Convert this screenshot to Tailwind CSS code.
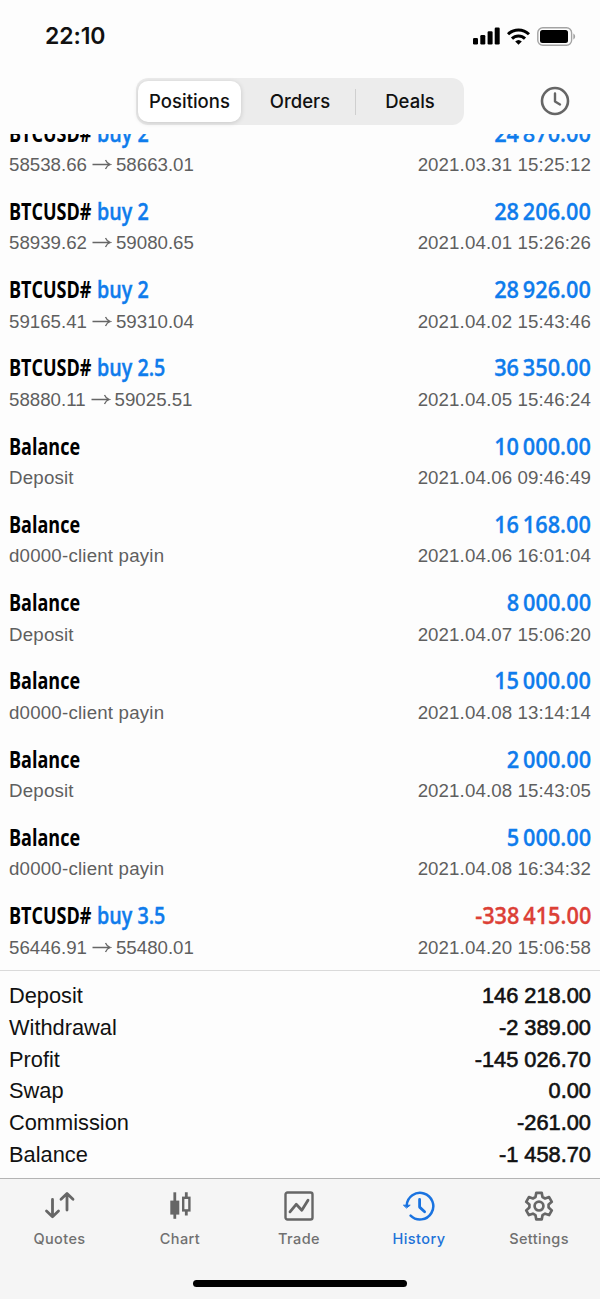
<!DOCTYPE html>
<html lang="en">
<head>
  <meta charset="UTF-8" />
  <meta name="viewport" content="width=device-width, initial-scale=1.0"/>
  <title>History | Positions</title>
  <script src="https://cdn.jsdelivr.net/npm/@tailwindcss/browser@4"></script>
</head>
<body class="bg-[#fdfdfd] text-black">

  <div class="w-[600px] h-[1299px] flex flex-col overflow-hidden font-['Liberation_Sans',sans-serif]">

    <!-- Status bar -->
    <div class="h-[72px] shrink-0 flex items-center justify-between pl-[45px] pr-[24px]">
      <span class="font-['Inter',sans-serif] font-semibold text-[23px] leading-none tracking-[-0.1px] text-[#111]">22:10</span>
      <div class="flex items-center gap-[7px]">
        <svg width="28" height="18" viewBox="0 0 28 18" fill="#000">
          <rect x="1" y="11" width="5" height="6.5" rx="1.2"/>
          <rect x="8.3" y="8" width="5" height="9.5" rx="1.2"/>
          <rect x="15.6" y="4.3" width="5" height="13.2" rx="1.2"/>
          <rect x="22.7" y="0.5" width="5" height="17" rx="1.2"/>
        </svg>
        <svg width="23" height="17" viewBox="0 0 23 17" fill="none" stroke="#000" stroke-width="3">
          <path d="M1 6.3a15 15 0 0 1 21 0"/>
          <path d="M5 10.6a9.2 9.2 0 0 1 13 0"/>
          <path d="M11.5 16.8l-3.3-3.3a4.8 4.8 0 0 1 6.6 0z" fill="#000" stroke="none"/>
        </svg>
        <svg width="39" height="19" viewBox="0 0 39 19">
          <rect x="0.8" y="0.8" width="33.8" height="17.4" rx="5" fill="none" stroke="#a3a3a3" stroke-width="1.4"/>
          <rect x="3" y="3" width="28" height="13" rx="2.5" fill="#000"/>
          <path d="M36.3 6.5c2.4 1 2.4 5 0 6z" fill="#a3a3a3"/>
        </svg>
      </div>
    </div>

    <!-- Segmented control -->
    <div class="h-[62px] shrink-0 flex justify-between pl-[136px] pr-[30px] pt-[6px]">
      <div class="w-[328px] h-[47px] rounded-[12px] bg-[#ececec] flex items-center font-['Inter',sans-serif] font-medium text-[18.5px] text-[#111]">
        <div class="w-[103px] h-[41px] ml-[2px] rounded-[10px] bg-white shadow-[0_1px_5px_rgba(0,0,0,0.16)] flex items-center justify-center">Positions</div>
        <div class="w-[114px] pl-[4px] flex items-center justify-center">Orders</div>
        <div class="w-px h-[26px] bg-[#cfcfcf]"></div>
        <div class="flex-1 flex items-center justify-center">Deals</div>
      </div>
      <svg class="mt-[8px]" width="30" height="30" viewBox="0 0 30 30" fill="none" stroke="#666" stroke-width="2.6" stroke-linecap="round" stroke-linejoin="round">
        <circle cx="15" cy="15" r="13"/>
        <path d="M15 7.5V15.5l5 3" stroke-width="2.4"/>
      </svg>
    </div>

    <!-- Positions list, scrolled so the first row slides under the header -->
    <div class="h-[837px] shrink-0 overflow-hidden border-b border-[#dadada]">
      <div id="list" class="-mt-[18px]"></div>
    </div>

    <!-- Totals -->
    <div id="totals" class="flex-1 pt-[9px] px-[9px] text-[21.8px] leading-[31.8px]"></div>

    <!-- Tab bar -->
    <div class="h-[121px] shrink-0 bg-[#f5f5f5] border-t border-[#b4b4b4] flex flex-col items-center">
      <div class="w-full h-[104px] pt-[11px] grid grid-cols-5 font-['Inter',sans-serif] font-medium text-[14.5px] leading-[18px] tracking-[0.4px] text-[#707070]">
        <div class="flex flex-col items-center gap-[8px] pr-px">
          <svg width="32" height="32" viewBox="0 0 32 32" fill="none" stroke="#666" stroke-width="2.8" stroke-linecap="round" stroke-linejoin="round">
            <path d="M8.5 9.5v17M2.5 21l6 5.7 6-5.7"/>
            <path d="M23 20V3.7M17 9.3l6-5.8 6 5.8"/>
          </svg>
          <span>Quotes</span>
        </div>
        <div class="flex flex-col items-center gap-[8px]">
          <svg width="32" height="32" viewBox="0 0 32 32" fill="none" stroke="#666" stroke-width="2.8">
            <path d="M10.8 2.3v26.5"/>
            <rect x="7.7" y="12" width="6.2" height="11.2" fill="#666"/>
            <path d="M22.3 2.3v5M22.3 20v5.5"/>
            <rect x="19.2" y="7.8" width="6.2" height="12.6" stroke-width="2.4"/>
          </svg>
          <span>Chart</span>
        </div>
        <div class="flex flex-col items-center gap-[8px] pr-[2px]">
          <svg width="32" height="32" viewBox="0 0 32 32" fill="none" stroke="#666" stroke-width="2.4" stroke-linecap="round" stroke-linejoin="round">
            <rect x="2.5" y="2.5" width="27" height="27" rx="2"/>
            <path d="M7 21.8l6.2-7.5 5.6 6L25 10.3" stroke-width="2.8"/>
          </svg>
          <span>Trade</span>
        </div>
        <div class="flex flex-col items-center gap-[8px] pr-[2px] text-[#2072d8]">
          <svg width="32" height="32" viewBox="0 0 32 32" fill="none" stroke="#1a73e0" stroke-width="2.5" stroke-linecap="round" stroke-linejoin="round">
            <path d="M3.7 15.5A13.3 13.3 0 1 1 7.6 25.6"/>
            <path d="M0.8 15.2h6.4l-3.4 2.6z" fill="#1a73e0" stroke-width="1"/>
            <path d="M16.6 9.5v7.6l5 4.6" stroke-width="2.8"/>
          </svg>
          <span>History</span>
        </div>
        <div class="flex flex-col items-center gap-[8px] pr-[2px]">
          <svg width="32" height="32" viewBox="0 0 32 32" fill="none" stroke="#666" stroke-width="2.7" stroke-linejoin="round">
            <path d="M13.3 2.8h5.4l.8 4.2 2.6 1.5 4-1.4 2.7 4.7-3.2 2.8v3l3.2 2.8-2.7 4.7-4-1.4-2.6 1.5-.8 4.2h-5.4l-.8-4.2-2.6-1.5-4 1.4-2.7-4.7 3.2-2.8v-3l-3.2-2.8 2.7-4.7 4 1.4 2.6-1.5z"/>
            <circle cx="16" cy="16.1" r="4.4"/>
          </svg>
          <span>Settings</span>
        </div>
      </div>
      <div class="w-[214px] h-[7px] shrink-0 rounded-full bg-black -mt-[3px]"></div>
    </div>
  </div>

  <script>
    const deals = [
      ["BTCUSD#", "buy 2", "24 870.00", "58538.66", "58663.01", "2021.03.31 15:25:12"],
      ["BTCUSD#", "buy 2", "28 206.00", "58939.62", "59080.65", "2021.04.01 15:26:26"],
      ["BTCUSD#", "buy 2", "28 926.00", "59165.41", "59310.04", "2021.04.02 15:43:46"],
      ["BTCUSD#", "buy 2.5", "36 350.00", "58880.11", "59025.51", "2021.04.05 15:46:24"],
      ["Balance", "", "10 000.00", "Deposit", "", "2021.04.06 09:46:49"],
      ["Balance", "", "16 168.00", "d0000-client payin", "", "2021.04.06 16:01:04"],
      ["Balance", "", "8 000.00", "Deposit", "", "2021.04.07 15:06:20"],
      ["Balance", "", "15 000.00", "d0000-client payin", "", "2021.04.08 13:14:14"],
      ["Balance", "", "2 000.00", "Deposit", "", "2021.04.08 15:43:05"],
      ["Balance", "", "5 000.00", "d0000-client payin", "", "2021.04.08 16:34:32"],
      ["BTCUSD#", "buy 3.5", "-338 415.00", "56446.91", "55480.01", "2021.04.20 15:06:58"]
    ];

    const totals = [
      ["Deposit", "146 218.00"],
      ["Withdrawal", "-2 389.00"],
      ["Profit", "-145 026.70"],
      ["Swap", "0.00"],
      ["Commission", "-261.00"],
      ["Balance", "-1 458.70"]
    ];

    const arrow = `<svg class="ml-[5px] mr-[4px]" width="20" height="12" viewBox="0 0 20 12" fill="none" stroke="#666" stroke-width="1.3"><path d="M0.5 5.5h18M13.5 1c1 2.500 2.500 3.800 4.800 4.500c-2.300.7-3.800 2-4.800 4.500"/></svg>`;

    document.getElementById("list").innerHTML = deals.map(([name, side, profit, from, to, time]) => `
      <div class="h-[78.28px] px-[9px]">
        <div class="h-[33px] flex justify-between items-center font-['Open_Sans',sans-serif] font-bold text-[24px] leading-[32px] whitespace-pre">
          <div class="flex">
            <div class="${side ? "w-[88px]" : ""}"><div class="w-max origin-left scale-x-[0.75]">${name}</div></div>
            <div class="w-max origin-left scale-x-[0.82] font-semibold [-webkit-text-stroke:0.4px] text-[#0f7cec]">${side}</div>
          </div>
          <div class="origin-right scale-x-[0.905] [word-spacing:-2px] font-semibold [-webkit-text-stroke:0.3px] ${profit[0] === "-" ? "text-[#dc4036]" : "text-[#0f7cec]"}">${profit}</div>
        </div>
        <div class="h-[32px] flex justify-between items-center text-[18.7px] tracking-[0.1px] text-[#5f5f5f]">
          <div class="flex items-center ${to ? "tracking-[0px]" : "tracking-[0.2px]"}">${from}${to ? arrow + to : ""}</div>
          <div>${time}</div>
        </div>
      </div>`).join("");

    document.getElementById("totals").innerHTML = totals.map(([label, value]) => `
      <div class="flex justify-between text-[#111]">
        <span>${label}</span>
        <span class="[-webkit-text-stroke:0.6px_#111]">${value}</span>
      </div>`).join("");
  </script>

</body>
</html>
